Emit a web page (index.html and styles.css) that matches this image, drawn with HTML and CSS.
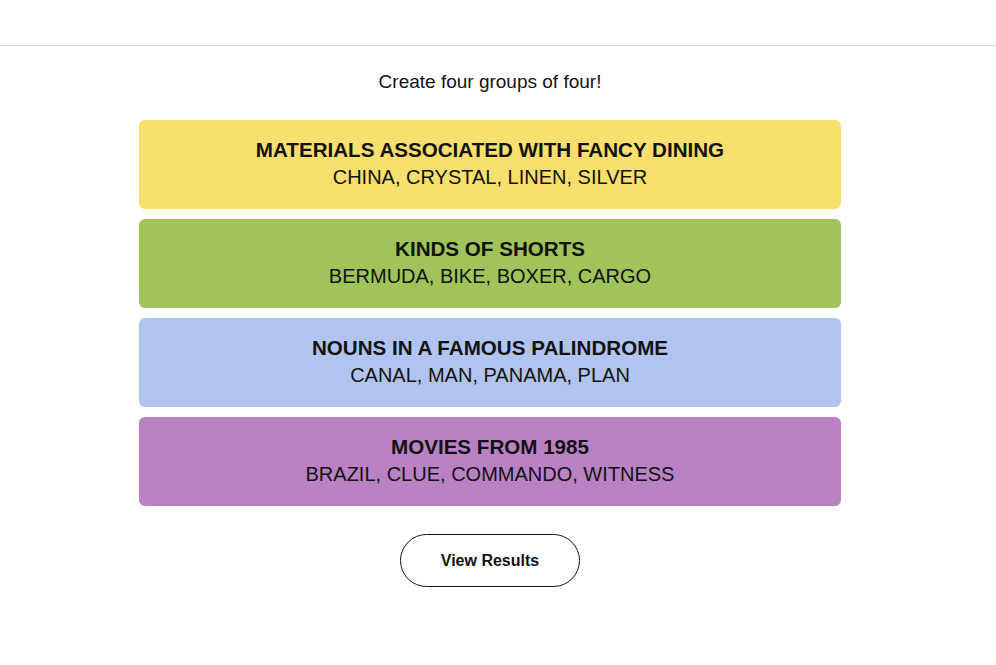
FILE: index.html
```html
<!DOCTYPE html>
<html>
<head>
<meta charset="utf-8">
<title>Connections</title>
<link rel="stylesheet" href="styles.css">
</head>
<body>
<div class="topbar"></div>
<div class="board">
  <p class="prompt">Create four groups of four!</p>
  <div class="groups">
    <div class="group yellow">
      <h3>MATERIALS ASSOCIATED WITH FANCY DINING</h3>
      <p>CHINA, CRYSTAL, LINEN, SILVER</p>
    </div>
    <div class="group green">
      <h3>KINDS OF SHORTS</h3>
      <p>BERMUDA, BIKE, BOXER, CARGO</p>
    </div>
    <div class="group blue">
      <h3>NOUNS IN A FAMOUS PALINDROME</h3>
      <p>CANAL, MAN, PANAMA, PLAN</p>
    </div>
    <div class="group purple">
      <h3>MOVIES FROM 1985</h3>
      <p>BRAZIL, CLUE, COMMANDO, WITNESS</p>
    </div>
  </div>
  <div class="actions">
    <button class="results">View Results</button>
  </div>
</div>
</body>
</html>
```
FILE: styles.css
```css
body{
  margin: 0;
  background: #fff;
  color: #121212;
  font-family: "Liberation Sans", Arial, sans-serif;
}

.topbar{
  height: 45px;
  border-bottom: 1px solid #dcdcdc;
}

.board{
  width: 980px;
}

.prompt{
  margin: 25px 0 0;
  text-align: center;
  font-family: "Liberation Sans", Arial, sans-serif;
  font-size: 19px;
  line-height: 22px;
}

.groups{
  width: 702px;
  margin: 27px auto 0;
  display: flex;
  flex-direction: column;
  gap: 10px;
}

.group{
  height: 89px;
  box-sizing: border-box;
  padding-bottom: 3px;
  border-radius: 6px;
  display: flex;
  flex-direction: column;
  justify-content: center;
  align-items: center;
}

.group h3{
  margin: 0;
  font-size: 20.6px;
  line-height: 27px;
  font-weight: 700;
}

.group p{
  margin: 0;
  font-size: 20px;
  line-height: 28px;
}

.yellow{ background: #f9df6d; }
.green{ background: #a0c35a; }
.blue{ background: #b0c4ef; }
.purple{ background: #ba81c5; }

.actions{
  display: flex;
  justify-content: center;
  margin-top: 28px;
}

.results{
  width: 180px;
  height: 53px;
  border: 1px solid #121212;
  border-radius: 27px;
  background: #fff;
  color: #121212;
  font-family: "Liberation Sans", Arial, sans-serif;
  font-size: 16px;
  font-weight: 700;
}
```
